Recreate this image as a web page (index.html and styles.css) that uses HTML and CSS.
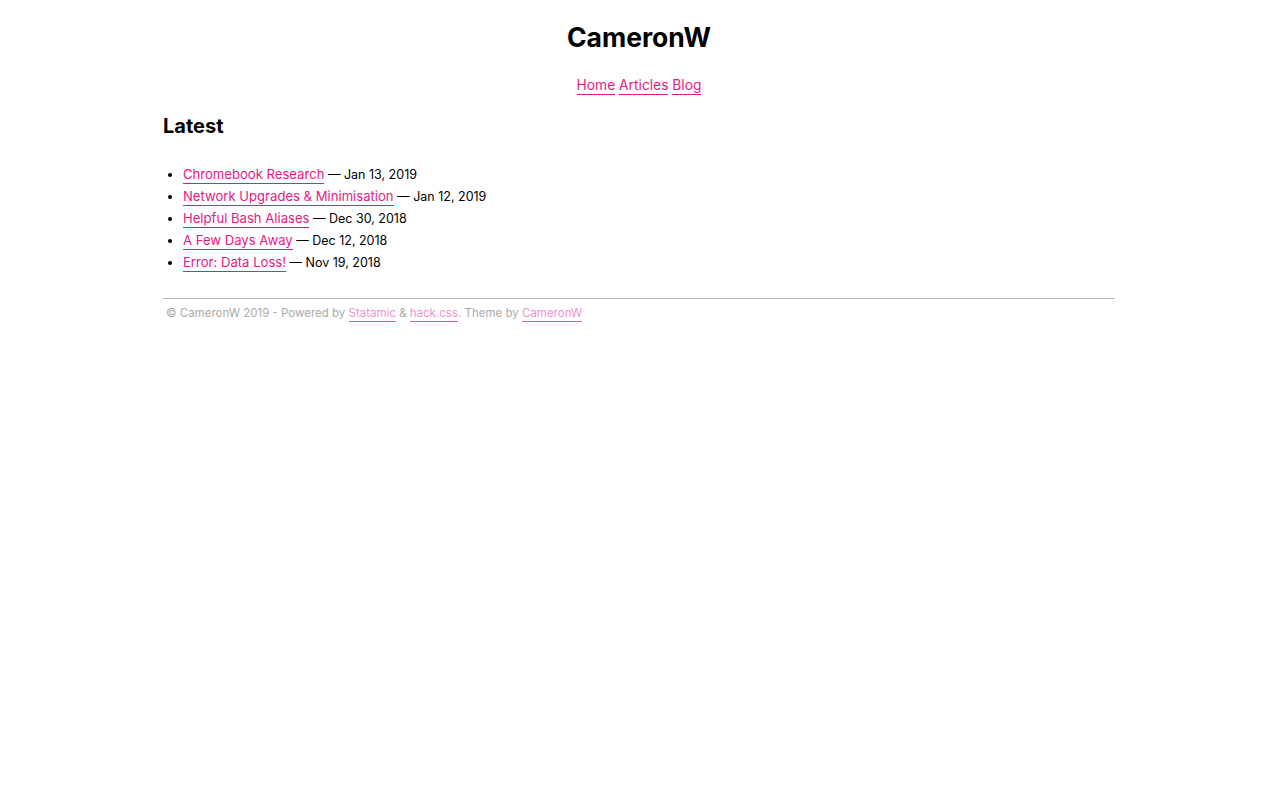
FILE: index.html
```html
<!DOCTYPE html>
<html>
<head>
<meta charset="utf-8">
<title>CameronW</title>
<link rel="stylesheet" href="styles.css">
</head>
<body>
<div class="container">
  <header class="site-header">
    <h1 class="site-title">CameronW</h1>
    <nav class="site-nav"><a href="#">Home</a> <a href="#">Articles</a> <a href="#">Blog</a></nav>
  </header>
  <main>
    <h2 class="section-title">Latest</h2>
    <ul class="post-list">
      <li><a href="#">Chromebook Research</a> — Jan 13, 2019</li>
      <li><a href="#">Network Upgrades &amp; Minimisation</a> — Jan 12, 2019</li>
      <li><a href="#">Helpful Bash Aliases</a> — Dec 30, 2018</li>
      <li><a href="#">A Few Days Away</a> — Dec 12, 2018</li>
      <li><a href="#">Error: Data Loss!</a> — Nov 19, 2018</li>
    </ul>
  </main>
  <footer class="site-footer">
    <p>© CameronW 2019 - Powered by <a href="#">Statamic</a> &amp; <a href="#">hack.css</a>. Theme by <a href="#">CameronW</a></p>
  </footer>
</div>
</body>
</html>
```
FILE: styles.css
```css
html, body {
  margin: 0;
  padding: 0;
  background: #fff;
}
body {
  font-family: Inter, "Noto Sans", sans-serif;
  color: #000;
  font-size: 13px;
}
.container {
  width: 952px;
  margin: 0 auto;
}
a {
  color: #e6197f;
  text-decoration: none;
  border-bottom: 1px solid #e6197f;
  padding-bottom: 1px;
}
.site-header {
  text-align: center;
  padding-top: 20px;
}
.site-title {
  font-size: 26.5px;
  font-weight: 700;
  margin: 0;
  line-height: 34px;
}
.site-nav {
  margin-top: 22px;
  font-size: 13.8px;
  line-height: 18px;
}
.section-title {
  font-size: 20px;
  font-weight: 700;
  margin: 19px 0 0 0;
  line-height: 26px;
}
.post-list {
  margin: 25px 0 0 0;
  padding-left: 20px;
  list-style: disc;
}
.post-list li {
  line-height: 22px;
  height: 22px;
  font-size: 12.5px;
}
.post-list li a {
  font-size: 13.1px;
  line-height: 16px;
}
.site-footer {
  margin-top: 24px;
  border-top: 1px solid #b8b8b8;
  color: #aaa;
  font-size: 11.5px;
}
.site-footer p {
  margin: 5px 0 0 3px;
  line-height: 18px;
}
.site-footer a {
  color: #f090d0;
  border-bottom-color: #d95bb0;
}
```
